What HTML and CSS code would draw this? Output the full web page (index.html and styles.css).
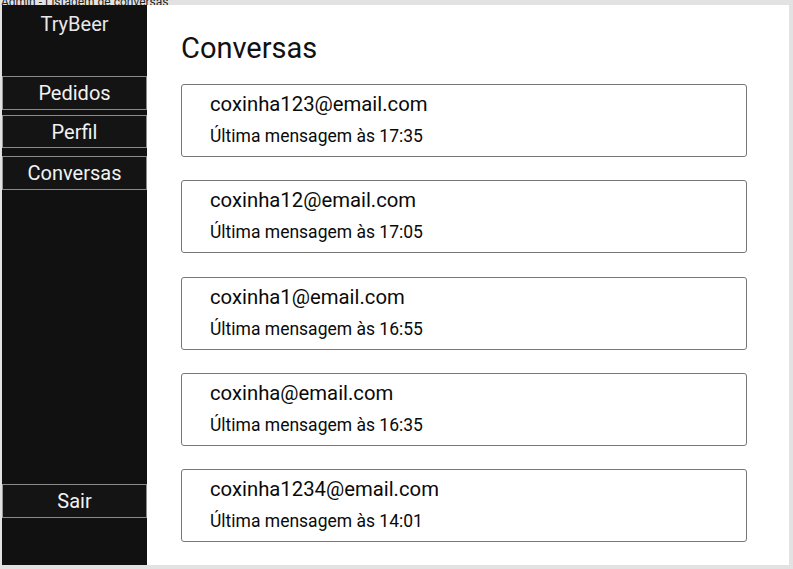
FILE: index.html
```html
<!DOCTYPE html>
<html lang="pt-BR">
<head>
<meta charset="utf-8">
<title>Admin - Listagem de conversas</title>
<link rel="stylesheet" href="styles.css">
</head>
<body>
<div class="titlebar"><span>Admin - Listagem de conversas</span></div>
<div class="frame">
  <aside class="sidebar">
    <div class="brand">TryBeer</div>
    <button class="nav-btn btn-pedidos">Pedidos</button>
    <button class="nav-btn btn-perfil">Perfil</button>
    <button class="nav-btn btn-conversas">Conversas</button>
    <div class="spacer"></div>
    <button class="nav-btn btn-sair">Sair</button>
  </aside>
  <main class="main">
    <h1 class="page-title">Conversas</h1>
    <ul class="chat-list">
      <li class="chat-card">
        <div class="chat-email">coxinha123@email.com</div>
        <div class="chat-time">Última mensagem às 17:35</div>
      </li>
      <li class="chat-card">
        <div class="chat-email">coxinha12@email.com</div>
        <div class="chat-time">Última mensagem às 17:05</div>
      </li>
      <li class="chat-card">
        <div class="chat-email">coxinha1@email.com</div>
        <div class="chat-time">Última mensagem às 16:55</div>
      </li>
      <li class="chat-card">
        <div class="chat-email">coxinha@email.com</div>
        <div class="chat-time">Última mensagem às 16:35</div>
      </li>
      <li class="chat-card">
        <div class="chat-email">coxinha1234@email.com</div>
        <div class="chat-time">Última mensagem às 14:01</div>
      </li>
    </ul>
  </main>
</div>
</body>
</html>
```

FILE: styles.css
```css
* { box-sizing: border-box; }

html, body {
  margin: 0;
  padding: 0;
  height: 569px;
  overflow: hidden;
  background: #e2e2e2;
  font-family: Roboto, "Liberation Sans", sans-serif;
}

.titlebar {
  height: 5px;
  overflow: hidden;
  display: flex;
  align-items: flex-end;
  font-size: 12px;
  line-height: 12px;
  color: #222;
  padding-left: 1px;
}

.titlebar span { display: block; margin-bottom: -3px; }

.frame {
  display: flex;
  margin-left: 2px;
  width: 787px;
  height: 560px;
}

.sidebar {
  width: 145px;
  background: #111111;
  display: flex;
  flex-direction: column;
  flex-shrink: 0;
}

.brand {
  color: #e8e8e8;
  font-size: 20px;
  line-height: 24px;
  text-align: center;
  padding-top: 7px;
  height: 71px;
}

.nav-btn {
  display: block;
  width: 145px;
  margin: 0;
  padding: 0;
  background: #141414;
  color: #f2f2f2;
  font-family: Roboto, "Liberation Sans", sans-serif;
  font-size: 20px;
  text-align: center;
  border: 1px solid #8a8a8a;
  border-left-color: #9a9a9a;
  height: 34px;
}

.btn-perfil { margin-top: 5px; height: 33px; }
.btn-conversas { margin-top: 8px; }

.spacer { flex: 1; }

.btn-sair { margin-bottom: 47px; }

.main {
  flex: 1;
  background: #ffffff;
  padding: 26px 42px 0 34px;
}

.page-title {
  margin: 0 0 19px 0;
  font-size: 29px;
  font-weight: 400;
  color: #111;
  line-height: 34px;
}

.chat-list {
  list-style: none;
  margin: 0;
  padding: 0;
  display: flex;
  flex-direction: column;
  gap: 23.25px;
}

.chat-card {
  height: 73px;
  border: 1px solid #777;
  border-radius: 3px;
  padding: 7px 28px 0 28px;
  color: #0a0a0a;
}

.chat-email {
  font-size: 20.3px;
  font-weight: 400;
  line-height: 24px;
}

.chat-time {
  font-size: 17.5px;
  line-height: 22px;
  margin-top: 9px;
}
```
